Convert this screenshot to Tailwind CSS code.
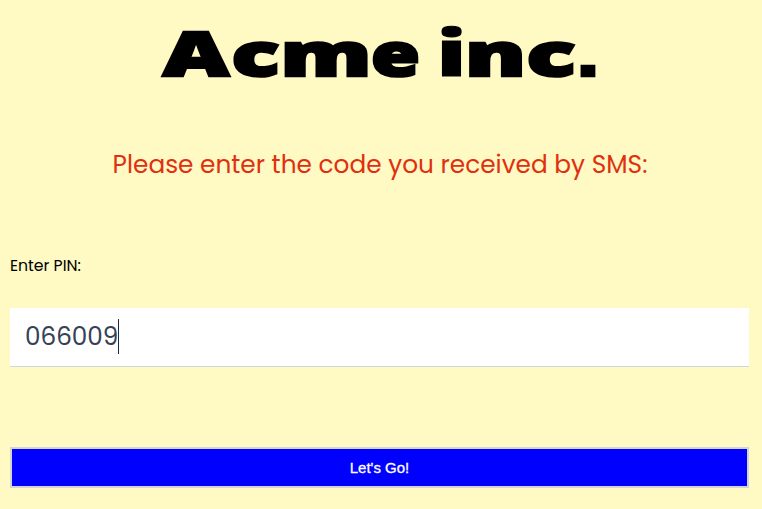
<!DOCTYPE html>
<html lang="en">
<head>
<meta charset="utf-8">
<title>Acme inc.</title>
<script src="https://cdn.jsdelivr.net/npm/@tailwindcss/browser@4"></script>
</head>
<body class="w-[762px] h-[509px] overflow-hidden bg-[#fff9c4] font-[Poppins,Inter,sans-serif]">
<main class="flex flex-col pl-[10px] pr-[13px]">
  <header class="flex h-[100px] -ml-[10px] -mr-[13px]">
    <svg class="w-[762px] h-[100px] font-['Open_Sans',sans-serif] font-extrabold" viewBox="0 0 762 100" role="img" aria-label="Acme inc.">
      <g font-size="61" stroke="#000" stroke-width="2.5" fill="#000">
        <text y="76.3"><tspan x="163" font-size="62" textLength="66" lengthAdjust="spacingAndGlyphs">A</tspan><tspan x="231.5" textLength="48" lengthAdjust="spacingAndGlyphs">c</tspan><tspan x="280.5" textLength="91" lengthAdjust="spacingAndGlyphs">m</tspan><tspan x="371" textLength="49" lengthAdjust="spacingAndGlyphs">e</tspan></text>
        <text y="76.3"><tspan x="436.5" font-size="63" stroke-width="1" textLength="30" lengthAdjust="spacingAndGlyphs">i</tspan><tspan x="465" textLength="61" lengthAdjust="spacingAndGlyphs">n</tspan><tspan x="526.5" textLength="49" lengthAdjust="spacingAndGlyphs">c</tspan><tspan class="font-['Liberation_Sans']" font-size="66" x="576.5" textLength="23" lengthAdjust="spacingAndGlyphs">.</tspan></text>
      </g>
    </svg>
  </header>
  <h1 class="mt-[45px] h-[40px] flex items-center justify-center whitespace-nowrap pl-px text-[24.8px] leading-[40px] text-[#e03010]">Please enter the code you received by SMS:</h1>
  <label for="pin" class="mt-[69px] h-6 text-[15.7px] leading-6 text-black">Enter PIN:</label>
  <div id="pin" class="mt-[30px] flex h-[59px] items-center border-b border-gray-300 bg-white pl-[15px] text-[24.7px] text-gray-700">
    <span>066009</span><span class="relative -top-px h-[35px] w-px bg-gray-800"></span>
  </div>
  <button class="mt-[80px] h-[41px] border-2 border-[#d4d4d4] bg-[#0000ff] pt-px font-['Liberation_Sans',sans-serif] text-[15px] text-white [-webkit-text-stroke:0.3px_white]">Let's Go!</button>
</main>
</body>
</html>
